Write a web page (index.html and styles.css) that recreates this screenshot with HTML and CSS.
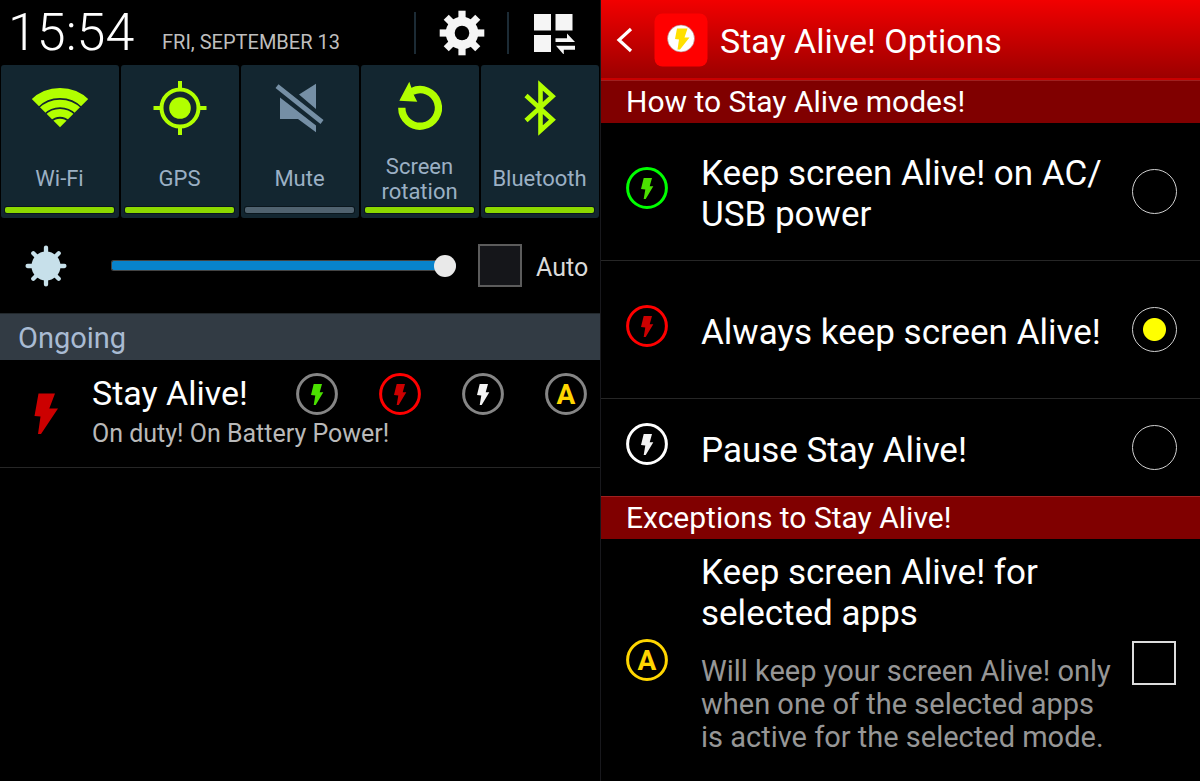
FILE: index.html
```html
<!DOCTYPE html>
<html lang="en">
<head>
<meta charset="utf-8">
<title>Stay Alive!</title>
<link rel="stylesheet" href="styles.css">
</head>
<body>
<svg class="defs" aria-hidden="true">
  <symbol id="bolt-ring" viewBox="0 0 42 42">
    <circle class="ring" cx="21" cy="21" r="19.4"/>
    <path class="bolt" d="M17.7 11H26l-2.300 8.200h3.600L19.700 32h-2l1.600-9.500-4.300-.500z"/>
  </symbol>
</svg>
<main class="screens">
  <section class="shade">
    <header class="status">
      <time class="clock">15:54</time>
      <span class="date">FRI, SEPTEMBER 13</span>
      <button class="status-btn" aria-label="Settings">
        <svg width="46" height="46" viewBox="-23 -23 46 46">
          <g fill="#f5f5f5">
            <g id="teeth"><rect x="-3.600" y="-22.300" width="7.200" height="44.600"/><rect x="-22.300" y="-3.600" width="44.600" height="7.200"/></g>
            <use href="#teeth" transform="rotate(45)"/>
            <circle r="16.300"/>
          </g>
          <circle r="7.300" fill="#000"/>
        </svg>
      </button>
      <button class="status-btn" aria-label="Quick panel">
        <svg width="42" height="42" viewBox="0 -2 42 42" fill="#f5f5f5">
          <path d="M0 0h17v16.500H0zM21.500 0h17v16.500h-17zM0 21h17v17H0zM21.500 24.200H33V19.500l8 8.500H21.500zM22 31.700h19v4H29.800v5z"/>
        </svg>
      </button>
    </header>
    <nav class="tiles">
      <button class="tile">
        <svg width="58" height="58" viewBox="-1 -9 58 58">
          <clipPath id="fan"><path d="M28 39.300-10 1.200V-5h76v6.200z"/></clipPath>
          <g clip-path="url(#fan)">
            <g fill="none" stroke="#b2ff00"><circle cx="28" cy="42" r="36.900" stroke-width="10"/><circle cx="28" cy="42" r="26.500" stroke-width="7.600"/><circle cx="28" cy="42" r="17.200" stroke-width="7.800"/></g>
            <circle cx="28" cy="42" r="11.300" fill="#b2ff00"/>
          </g>
        </svg>
        <span class="tile-label">Wi-Fi</span><span class="tile-bar"></span>
      </button>
      <button class="tile">
        <svg width="58" height="58" viewBox="-29 -29 58 58" fill="none" stroke="#b2ff00" stroke-width="4">
          <circle r="18.500"/><circle r="10.800" fill="#b2ff00" stroke="none"/>
          <path d="M0-27v8M0 19v8M-26.500 0h8M18.500 0h8"/>
        </svg>
        <span class="tile-label">GPS</span><span class="tile-bar"></span>
      </button>
      <button class="tile">
        <svg width="58" height="58" viewBox="-29 -29 58 58" fill="#758fa5">
          <path d="M-1-13.500 16-24.300V1zM-20-10.500 16 17.500v6.700L-2 11h-18zM-24.500-20l3-3.700L23.500 12l-3 4z"/>
        </svg>
        <span class="tile-label">Mute</span><span class="tile-bar off"></span>
      </button>
      <button class="tile">
        <svg width="58" height="58" viewBox="-29 -29 58 58">
          <path d="M-18.200-.200A18.300 18.300 0 1 0-8-16.500" fill="none" stroke="#b2ff00" stroke-width="7.300"/>
          <path d="M-10.700-26.300-20.700-7.300l18 1L-5.700-12z" fill="#b2ff00"/>
        </svg>
        <span class="tile-label">Screen<br>rotation</span><span class="tile-bar"></span>
      </button>
      <button class="tile">
        <svg width="58" height="58" viewBox="-29 -29 58 58" fill="none" stroke="#b2ff00" stroke-width="4.600">
          <path d="M-14-12.500 12.500 11.700.500 22.500v-45L12.500-11.700-14 12.500"/>
        </svg>
        <span class="tile-label">Bluetooth</span><span class="tile-bar"></span>
      </button>
    </nav>
    <div class="brightness">
      <svg width="42" height="42" viewBox="-21 -21 42 42" stroke="#c7e0ea" stroke-width="4.300" stroke-linecap="round">
        <circle r="14.500" fill="#c7e0ea" stroke="none"/>
        <path d="M0-18.400v36.800M-18.400 0h36.800M-12.700-12.700l25.400 25.400M-12.700 12.700l25.400-25.400"/>
      </svg>
      <input class="slider" type="range" min="0" max="100" value="100" aria-label="Brightness">
      <input class="auto-box" type="checkbox" id="auto">
      <label class="auto-label" for="auto">Auto</label>
    </div>
    <h2 class="ongoing">Ongoing</h2>
    <article class="notice">
      <svg class="notice-bolt" width="25" height="42" viewBox="0 0 25 42"><path fill="#c00" d="M4.500.500H21L15.300 15.500h8.700L7 41H4L6.500 23.500l-6-.500z"/></svg>
      <div class="notice-main">
        <div class="notice-top">
          <h3 class="notice-title">Stay Alive!</h3>
          <button class="mode idle green-bolt" aria-label="Keep alive on power"><svg class="badge"><use href="#bolt-ring"/></svg></button>
          <button class="mode red" aria-label="Always keep alive"><svg class="badge"><use href="#bolt-ring"/></svg></button>
          <button class="mode idle white-bolt" aria-label="Pause"><svg class="badge"><use href="#bolt-ring"/></svg></button>
          <button class="mode idle" aria-label="Selected apps"><svg class="badge" viewBox="0 0 42 42"><circle class="ring" cx="21" cy="21" r="19.4"/><text class="ring-letter" x="21" y="31" text-anchor="middle">A</text></svg></button>
        </div>
        <p class="notice-text">On duty! On Battery Power!</p>
      </div>
    </article>
  </section>

  <section class="options">
    <header class="bar">
      <button class="back" aria-label="Back"><svg width="18" height="26" viewBox="0 0 18 26"><path d="M16 2 4 13l12 11" fill="none" stroke="#fff" stroke-width="3.200"/></svg></button>
      <svg class="app-icon" width="54" height="54" viewBox="0 0 54 54">
        <rect x=".500" y=".500" width="53" height="53" rx="8" fill="red"/>
        <circle cx="27" cy="25.500" r="13.500" fill="#fff" stroke="#a77" stroke-width=".600"/>
        <path fill="#ffe000" d="M23 15.500h10.500l-3 9h5L26 36.500h-2.500l1.500-10-4-.500z"/>
      </svg>
      <h1 class="bar-title">Stay Alive! Options</h1>
    </header>
    <h2 class="group">How to Stay Alive modes!</h2>
    <div class="option tall">
      <svg class="badge green"><use href="#bolt-ring"/></svg>
      <label class="option-title" for="m1">Keep screen Alive! on AC/<br>USB power</label>
      <input class="radio" type="radio" name="mode" id="m1">
    </div>
    <div class="option tall">
      <svg class="badge red"><use href="#bolt-ring"/></svg>
      <label class="option-title" for="m2">Always keep screen Alive!</label>
      <input class="radio" type="radio" name="mode" id="m2" checked>
    </div>
    <div class="option short">
      <svg class="badge white"><use href="#bolt-ring"/></svg>
      <label class="option-title" for="m3">Pause Stay Alive!</label>
      <input class="radio" type="radio" name="mode" id="m3">
    </div>
    <h2 class="group">Exceptions to Stay Alive!</h2>
    <div class="option apps">
      <svg class="badge yellow" viewBox="0 0 42 42"><circle class="ring" cx="21" cy="21" r="19.4"/><text class="ring-letter" x="21" y="31" text-anchor="middle">A</text></svg>
      <div class="option-body">
        <label class="option-title" for="apps">Keep screen Alive! for<br>selected apps</label>
        <p class="option-text">Will keep your screen Alive! only<br>when one of the selected apps<br>is active for the selected mode.</p>
      </div>
      <input class="check" type="checkbox" id="apps">
    </div>
  </section>
</main>
</body>
</html>
```
FILE: styles.css
```css
* { box-sizing: border-box; }
body {
  margin: 0;
  background: #000;
  color: #fff;
  font-family: Roboto, "Noto Sans", sans-serif;
}
h1, h2, h3, p { margin: 0; font-weight: 400; }
button {
  padding: 0;
  border: 0;
  background: none;
  color: inherit;
  font: inherit;
}
input { margin: 0; appearance: none; }
svg { display: block; flex: none; }
.defs { position: absolute; width: 0; height: 0; }

.screens {
  display: grid;
  grid-template-columns: 1fr 1fr;
  min-height: 100vh;
}

/* Notification shade */
.status {
  display: flex;
  align-items: center;
  height: 65px;
  padding-left: 8px;
}
.clock {
  width: 154px;
  font-size: 52px;
  font-weight: 300;
  line-height: 60px;
}
.date {
  flex: 1;
  padding-top: 19px;
  color: #bebebe;
  font-size: 20px;
  white-space: nowrap;
}
.status-btn {
  display: flex;
  justify-content: center;
  align-items: center;
  width: 93px;
  height: 42px;
  border-left: 2px solid #1c2b35;
}

.tiles {
  display: grid;
  grid-template-columns: repeat(5, 1fr);
  gap: 2px;
  padding: 0 1px;
}
.tile {
  display: flex;
  flex-direction: column;
  align-items: center;
  height: 153px;
  padding: 14px 5px 5px 4px;
  border-radius: 3px;
  background: #132630;
}
.tile-label {
  display: flex;
  align-items: center;
  flex: 1;
  padding-top: 13px;
  color: #9bb0c4;
  font-size: 22px;
  line-height: 25px;
}
.tile-bar {
  width: 100%;
  height: 6px;
  border-radius: 2px;
  background: #8cd800;
  box-shadow: 0 0 0 1px #0a161d;
}
.tile-bar.off { background: #50626f; }

.brightness {
  display: flex;
  align-items: center;
  height: 95px;
  padding: 0 12px 0 25px;
}
.slider {
  flex: 1;
  min-width: 0;
  height: 22px;
  margin: 0 22px 0 44px;
  background: none;
}
.slider::-webkit-slider-runnable-track {
  height: 11px;
  border: 1px solid #444;
  border-right: 0;
  border-radius: 3px 6px 6px 3px;
  background: #0883cc;
}
.slider::-webkit-slider-thumb {
  appearance: none;
  width: 22px;
  height: 22px;
  margin-top: -6px;
  border-radius: 50%;
  background: #e9e9e9;
}
.auto-box {
  width: 44px;
  height: 43px;
  border: 2px solid #5c5c5c;
  background: #15161a;
}
.auto-label {
  width: 66px;
  padding: 4px 0 0 14px;
  color: #dadada;
  font-size: 25px;
}

.ongoing {
  height: 47px;
  padding-left: 18px;
  border-top: 1px solid #22282c;
  background: #323b44;
  color: #a9bbd3;
  font-size: 29px;
  line-height: 48px;
}
.notice {
  display: flex;
  height: 108px;
  padding: 11px 13px 0 34px;
  border-bottom: 1px solid #262626;
}
.notice-bolt { margin-top: 22px; }
.notice-main { flex: 1; padding-left: 33px; }
.notice-top { display: flex; align-items: center; gap: 41px; }
.notice-title { flex: 1; font-size: 34px; line-height: 45px; white-space: nowrap; }
.notice-text { color: #b9b9b9; font-size: 25px; line-height: 36px; }

/* Round badges */
.badge { width: 42px; height: 42px; --ring: #858585; --bolt: #fff; }
.ring { fill: none; stroke: var(--ring); stroke-width: 3; }
.bolt { fill: var(--bolt); }
.ring-letter { fill: #ffd600; font-size: 28px; font-weight: 700; }
.green-bolt .badge { --bolt: #4be000; }
.white-bolt .badge { --bolt: #f4f4f4; }
.red .badge, .badge.red { --ring: #f00; --bolt: #c00; }
.badge.green { --ring: #0f0; --bolt: #4be000; }
.badge.white { --ring: #fff; --bolt: #f4f4f4; }
.badge.yellow { --ring: #ffd600; }

/* Options screen */
.options { border-left: 1px solid #18181c; }
.bar {
  display: flex;
  align-items: center;
  height: 80px;
  padding-left: 14px;
  border-bottom: 2px solid #c80000;
  background: linear-gradient(#f20000, #9c0000);
}
.back { width: 39px; padding-top: 2px; }
.app-icon { margin-top: 2px; }
.bar-title { padding: 4px 0 0 12px; font-size: 34px; line-height: 41px; }
.group {
  height: 43px;
  padding-left: 25px;
  border-top: 1px solid #a02020;
  background: #800000;
  font-size: 30px;
  line-height: 41px;
}
.option {
  display: grid;
  grid-template-columns: 42px 1fr 45px;
  align-items: center;
  padding: 0 23px 0 25px;
}
.option .badge { margin-bottom: 8px; }
.tall { height: 138px; border-bottom: 1px solid #262626; }
.short { height: 97px; }
.option-title {
  display: block;
  padding: 5px 0 0 33px;
  font-size: 35px;
  line-height: 41px;
  white-space: nowrap;
}
.option-text {
  padding: 21px 0 0 33px;
  color: #969696;
  font-size: 29px;
  line-height: 33px;
  white-space: nowrap;
}
.radio {
  width: 45px;
  height: 45px;
  border: 1px solid #d0d0d0;
  border-radius: 50%;
}
.radio:checked { background: radial-gradient(circle, #ff0 11px, transparent 12px); }
.apps { height: 241px; }
.apps .badge { margin-bottom: 0; }
.option-body { padding-bottom: 18px; }
.check {
  width: 44px;
  height: 44px;
  margin-top: 7px;
  border: 2px solid #dcdcdc;
}
```
